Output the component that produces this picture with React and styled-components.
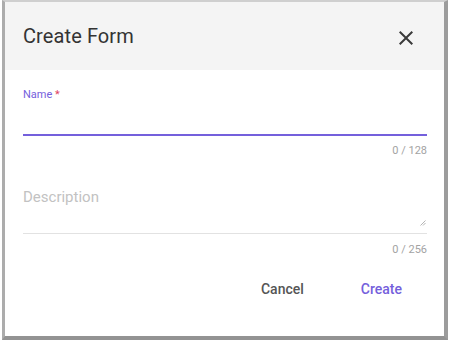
import React, { useState } from "react"
import styled, { createGlobalStyle } from "styled-components"

const GlobalStyle = createGlobalStyle`
  html, body {
    margin: 0;
    padding: 0;
    background: #ffffff;
  }
  body {
    font-family: Roboto, "Liberation Sans", sans-serif;
  }
`

const accent = "#7460dc"

const Frame = styled.div`
  width: 450px;
  height: 342px;
  background: #ffffff;
  overflow: hidden;
`

const Dialog = styled.div`
  box-sizing: border-box;
  width: 446px;
  height: 340px;
  margin-left: 2px;
  display: flex;
  flex-direction: column;
  background: #ffffff;
  border-top: 2px solid #cfcfcf;
  border-left: 3px solid #acacac;
  border-right: 4px solid #9c9c9c;
  border-bottom: 4px solid #939393;
`

const Header = styled.div`
  height: 68px;
  flex-shrink: 0;
  display: flex;
  align-items: center;
  justify-content: space-between;
  background: #f4f4f4;
  padding-left: 18px;
  padding-right: 26px;
`

const Title = styled.h2`
  margin: 0;
  font-size: 20px;
  font-weight: 400;
  color: #333333;
  letter-spacing: 0.1px;
`

const CloseButton = styled.button`
  width: 24px;
  height: 24px;
  padding: 0;
  margin-top: 4px;
  border: none;
  background: none;
  color: #3a3a3a;
  cursor: pointer;
  svg {
    display: block;
  }
`

const Body = styled.div`
  padding: 18px 17px 0 18px;
  display: flex;
  flex-direction: column;
`

const Label = styled.label`
  font-size: 11px;
  line-height: 14px;
  color: ${accent};
  span {
    color: #e0445f;
  }
`

const NameInput = styled.input`
  box-sizing: border-box;
  height: 34px;
  padding: 0;
  border: none;
  border-bottom: 2px solid ${accent};
  outline: none;
  font-family: inherit;
  font-size: 15px;
  color: #333333;
  background: transparent;
`

const Counter = styled.div`
  margin-top: ${p => p.$top}px;
  text-align: right;
  font-size: 11px;
  line-height: 13px;
  color: #a3a3a3;
`

const TextareaWrap = styled.div`
  position: relative;
  margin-top: 30px;
  display: flex;
`

const DescriptionInput = styled.textarea`
  box-sizing: border-box;
  flex: 1;
  height: 47px;
  padding: 0;
  border: none;
  border-bottom: 1px solid #e2e2e2;
  outline: none;
  resize: none;
  font-family: inherit;
  font-size: 15px;
  line-height: 20px;
  color: #333333;
  background: transparent;
  &::placeholder {
    color: #c2c2c2;
  }
`

const Grip = styled.svg`
  position: absolute;
  right: 1px;
  bottom: 8px;
  pointer-events: none;
`

const Actions = styled.div`
  display: flex;
  justify-content: flex-end;
  gap: 25px;
  margin-top: 15px;
  padding-right: 9px;
`

const TextButton = styled.button`
  height: 36px;
  padding: 0 16px;
  border: none;
  background: none;
  font-family: inherit;
  font-size: 14px;
  font-weight: 500;
  color: ${p => (p.$primary ? accent : "#555555")};
  cursor: pointer;
`

const App = () => {
  const [name, setName] = useState("")
  const [description, setDescription] = useState("")

  return (
    <Frame>
      <GlobalStyle />
      <Dialog>
        <Header>
          <Title>Create Form</Title>
          <CloseButton aria-label="Close">
            <svg width="24" height="24" viewBox="0 0 24 24" fill="currentColor">
              <path d="M19 6.41L17.59 5 12 10.59 6.41 5 5 6.41 10.59 12 5 17.59 6.41 19 12 13.41 17.59 19 19 17.59 13.41 12z" />
            </svg>
          </CloseButton>
        </Header>
        <Body>
          <Label htmlFor="name">
            Name <span>*</span>
          </Label>
          <NameInput
            id="name"
            maxLength={128}
            value={name}
            onChange={e => setName(e.currentTarget.value)}
          />
          <Counter $top={8}>{name.length} / 128</Counter>
          <TextareaWrap>
            <DescriptionInput
              placeholder="Description"
              maxLength={256}
              value={description}
              onChange={e => setDescription(e.currentTarget.value)}
            />
            <Grip width="6" height="6" viewBox="0 0 6 6">
              <path d="M0.5 5.5L5.5 0.5M3 5.5L5.5 3" stroke="#b5b5b5" strokeWidth="1" fill="none" />
            </Grip>
          </TextareaWrap>
          <Counter $top={9}>{description.length} / 256</Counter>
          <Actions>
            <TextButton>Cancel</TextButton>
            <TextButton $primary>Create</TextButton>
          </Actions>
        </Body>
      </Dialog>
    </Frame>
  )
}

export default App
